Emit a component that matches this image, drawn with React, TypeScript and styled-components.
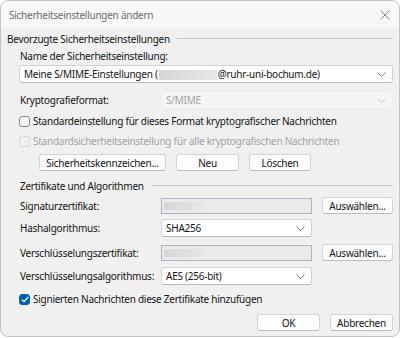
import React from "react";
import styled, { createGlobalStyle } from "styled-components";

const Global = createGlobalStyle`
  html, body { margin: 0; padding: 0; background: #ffffff; }
  body {
    font-family: "Noto Sans", "Segoe UI", sans-serif;
    font-size: 10px;
    letter-spacing: -0.25px;
    color: #141414;
  }
  * { box-sizing: border-box; }
`;

const Window = styled.div`
  width: 400px;
  height: 337px;
  border: 1px solid #c4c4c4;
  border-radius: 8px;
  background: #f0f0f0;
  overflow: hidden;
  display: flex;
  flex-direction: column;
`;

const TitleBar = styled.div`
  height: 27px;
  background: #f7f7f7;
  display: flex;
  align-items: center;
  justify-content: space-between;
  padding: 0 9px 0 8px;
  flex: none;
`;

const Title = styled.span`
  color: #6d6d6d;
  font-size: 10px;
`;

const Body = styled.div`
  padding: 3px 6px 0 6px;
  display: flex;
  flex-direction: column;
`;

const SectionHeader = styled.div<{ $indent?: number; $mt?: number }>`
  display: flex;
  align-items: center;
  height: 16px;
  padding-left: ${(p) => p.$indent ?? 0}px;
  margin-top: ${(p) => p.$mt ?? 0}px;
  white-space: nowrap;
  &::after {
    content: "";
    flex: 1;
    height: 1px;
    background: #c9c9c9;
    margin-left: 7px;
    margin-top: -2px;
  }
`;

const Label = styled.div<{ $indent?: number; $mt?: number }>`
  height: 16px;
  line-height: 16px;
  padding-left: ${(p) => p.$indent ?? 0}px;
  margin-top: ${(p) => p.$mt ?? 0}px;
  white-space: nowrap;
`;

const Select = styled.div<{ $disabled?: boolean; $ml?: number; $mt?: number }>`
  height: 18px;
  margin-left: ${(p) => p.$ml ?? 0}px;
  margin-top: ${(p) => p.$mt ?? 0}px;
  background: ${(p) => (p.$disabled ? "#f5f5f5" : "#ffffff")};
  border: 1px solid ${(p) => (p.$disabled ? "#eaeaea" : "#d2d2d2")};
  border-bottom-color: ${(p) => (p.$disabled ? "#eaeaea" : "#b8b8b8")};
  border-radius: 3px;
  display: flex;
  align-items: center;
  padding: 0 6px 0 4px;
  color: ${(p) => (p.$disabled ? "#a3a3a3" : "#141414")};
  white-space: nowrap;
  & > svg { margin-left: auto; }
`;

const Blur = styled.span<{ $w: number; $h?: number }>`
  display: inline-block;
  width: ${(p) => p.$w}px;
  height: ${(p) => p.$h ?? 10}px;
  vertical-align: middle;
  background: linear-gradient(90deg, #d7d7d7, #dfdfdf 60%, #e8e8e8);
  margin: 0 1px;
`;

const Field = styled.div`
  height: 16px;
  background: #eaeaea;
  border: 1px solid #a9b6c8;
  display: flex;
  align-items: center;
  padding-left: 1px;
`;

const Button = styled.button<{ $w: number }>`
  width: ${(p) => p.$w}px;
  height: 17px;
  background: #fdfdfd;
  border: 1px solid #d4d4d4;
  border-bottom-color: #bcbcbc;
  border-radius: 3px;
  font-family: inherit;
  font-size: 10px;
  letter-spacing: -0.25px;
  color: #141414;
  padding: 0;
  line-height: 14px;
  white-space: nowrap;
`;

const Row = styled.div<{ $mt?: number }>`
  display: grid;
  grid-template-columns: 141px 151px 1fr;
  align-items: center;
  margin-left: 13px;
  margin-top: ${(p) => p.$mt ?? 0}px;
  white-space: nowrap;
  & > button { justify-self: end; }
`;

const WideRow = styled.div<{ $mt?: number }>`
  display: grid;
  grid-template-columns: 141px 1fr;
  align-items: center;
  margin-left: 13px;
  margin-top: ${(p) => p.$mt ?? 0}px;
`;

const CheckRow = styled.label<{ $mt?: number; $disabled?: boolean }>`
  display: flex;
  align-items: center;
  gap: 3px;
  height: 16px;
  margin-left: 12px;
  margin-top: ${(p) => p.$mt ?? 0}px;
  color: ${(p) => (p.$disabled ? "#a3a3a3" : "#141414")};
  white-space: nowrap;
`;

const Box = styled.span<{ $checked?: boolean; $disabled?: boolean }>`
  width: 11px;
  height: 11px;
  border-radius: 3px;
  flex: none;
  display: flex;
  align-items: center;
  justify-content: center;
  background: ${(p) => (p.$checked ? "#005fb8" : p.$disabled ? "#f0f0f0" : "#f7f7f7")};
  border: 1px solid ${(p) => (p.$checked ? "#005fb8" : p.$disabled ? "#d6d6d6" : "#8a8a8a")};
`;

const ButtonRow = styled.div<{ $ml?: number; $mt?: number; $end?: boolean }>`
  display: flex;
  gap: 10px;
  margin-left: ${(p) => p.$ml ?? 0}px;
  margin-top: ${(p) => p.$mt ?? 0}px;
  justify-content: ${(p) => (p.$end ? "flex-end" : "flex-start")};
`;

const Chevron = ({ disabled }: { disabled?: boolean }) => (
  <svg width="9" height="5" viewBox="0 0 9 5">
    <path d="M0.5 0.5 L4.5 4.5 L8.5 0.5" fill="none" stroke={disabled ? "#c8c8c8" : "#7a7a7a"} strokeWidth="1" />
  </svg>
);

const Close = () => (
  <svg width="10" height="10" viewBox="0 0 10 10">
    <path d="M0.5 0.5 L9.5 9.5 M9.5 0.5 L0.5 9.5" stroke="#8a8a8a" strokeWidth="1" />
  </svg>
);

const Check = () => (
  <svg width="8" height="7" viewBox="0 0 8 7">
    <path d="M0.8 3.6 L3 5.7 L7.2 1" fill="none" stroke="#fff" strokeWidth="1.2" />
  </svg>
);

export default function App() {
  return (
    <>
      <Global />
      <Window>
        <TitleBar>
          <Title>Sicherheitseinstellungen ändern</Title>
          <Close />
        </TitleBar>
        <Body>
          <SectionHeader>Bevorzugte Sicherheitseinstellungen</SectionHeader>
          <Label $indent={13} $mt={1}>Name der Sicherheitseinstellung:</Label>
          <Select $ml={12} $mt={1}>
            <span>
              Meine S/MIME-Einstellungen (<Blur $w={58} />@ruhr-uni-bochum.de)
            </span>
            <Chevron />
          </Select>
          <WideRow $mt={8}>
            <span>Kryptografieformat:</span>
            <Select $disabled>
              <span>S/MIME</span>
              <Chevron disabled />
            </Select>
          </WideRow>
          <CheckRow $mt={4}>
            <Box />
            <span>Standardeinstellung für dieses Format kryptografischer Nachrichten</span>
          </CheckRow>
          <CheckRow $mt={4} $disabled>
            <Box $disabled />
            <span>Standardsicherheitseinstellung für alle kryptografischen Nachrichten</span>
          </CheckRow>
          <ButtonRow $ml={32} $mt={5}>
            <Button $w={127}>Sicherheitskennzeichen...</Button>
            <Button $w={63}>Neu</Button>
            <Button $w={62}>Löschen</Button>
          </ButtonRow>
          <SectionHeader $indent={13} $mt={7}>Zertifikate und Algorithmen</SectionHeader>
          <Row $mt={3}>
            <span>Signaturzertifikat:</span>
            <Field><Blur $w={40} $h={8} /></Field>
            <Button $w={71}>Auswählen...</Button>
          </Row>
          <Row $mt={5}>
            <span>Hashalgorithmus:</span>
            <Select>
              <span>SHA256</span>
              <Chevron />
            </Select>
          </Row>
          <Row $mt={7}>
            <span>Verschlüsselungszertifikat:</span>
            <Field><Blur $w={40} $h={8} /></Field>
            <Button $w={71}>Auswählen...</Button>
          </Row>
          <Row $mt={6}>
            <span>Verschlüsselungsalgorithmus:</span>
            <Select>
              <span>AES (256-bit)</span>
              <Chevron />
            </Select>
          </Row>
          <CheckRow $mt={6}>
            <Box $checked><Check /></Box>
            <span>Signierten Nachrichten diese Zertifikate hinzufügen</span>
          </CheckRow>
          <ButtonRow $mt={7} $end>
            <Button $w={63}>OK</Button>
            <Button $w={63}>Abbrechen</Button>
          </ButtonRow>
        </Body>
      </Window>
    </>
  );
}
